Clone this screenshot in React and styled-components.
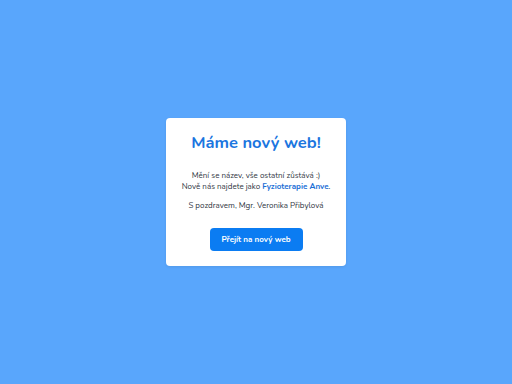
import React from "react";
import styled, { createGlobalStyle } from "styled-components";

const GlobalStyle = createGlobalStyle`
  html, body {
    margin: 0;
    height: 100%;
  }
  body {
    background: #59a6fc;
    font-family: "Nunito", "Lato", "Noto Sans", sans-serif;
  }
  #root {
    height: 100%;
  }
`;

const Page = styled.main`
  height: 100%;
  display: flex;
  align-items: center;
  justify-content: center;
`;

const Card = styled.section`
  width: 180px;
  box-sizing: border-box;
  padding: 13px 10px 15px;
  background: #ffffff;
  border-radius: 4px;
  text-align: center;
  box-shadow: 0 1px 3px rgba(0, 0, 0, 0.08);
`;

const Title = styled.h1`
  margin: 0 0 15px;
  font-size: 16.5px;
  font-weight: 700;
  color: #1b76df;
  line-height: 24px;
`;

const Text = styled.p`
  margin: 0 0 ${(p) => p.$gap || 0}px;
  font-size: 8px;
  line-height: 11px;
  color: #30363f;
`;

const Brand = styled.a`
  color: #1b6fd6;
  font-weight: 700;
  text-decoration: none;
`;

const Button = styled.a`
  display: inline-flex;
  align-items: center;
  justify-content: center;
  width: 93px;
  height: 23px;
  margin-top: 17px;
  border-radius: 4px;
  background: #0b7cf2;
  color: #ffffff;
  font-size: 8px;
  font-weight: 700;
  text-decoration: none;
`;

export default function App() {
  return (
    <>
      <GlobalStyle />
      <Page>
        <Card>
          <Title>Máme nový web!</Title>
          <Text>Mění se název, vše ostatní zůstává :)</Text>
          <Text $gap={8}>
            Nově nás najdete jako <Brand href="#">Fyzioterapie Anve</Brand>.
          </Text>
          <Text>S pozdravem, Mgr. Veronika Přibylová</Text>
          <Button href="#">Přejít na nový web</Button>
        </Card>
      </Page>
    </>
  );
}
